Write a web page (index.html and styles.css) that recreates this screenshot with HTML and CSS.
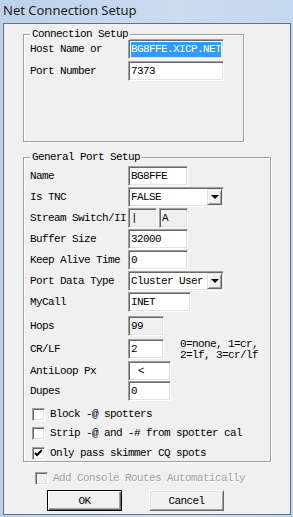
FILE: index.html
```html
<!DOCTYPE html>
<html lang="en">
<head>
  <meta charset="UTF-8">
  <meta name="viewport" content="width=device-width, initial-scale=1.0">
  <title>Net Connection Setup</title>
  <link rel="stylesheet" href="styles.css">
</head>
<body>
  <div class="window">
    <div class="titlebar">Net Connection Setup</div>
    <div class="client">

      <div class="group group-conn">
        <span class="group-title">Connection Setup</span>
        <div class="row row-22">
          <span class="label">Host Name or</span>
          <div class="field w96"><span class="selected">BG8FFE.XICP.NET</span></div>
        </div>
        <div class="row row-22">
          <span class="label">Port Number</span>
          <div class="field w96">7373</div>
        </div>
      </div>

      <div class="group group-port">
        <span class="group-title">General Port Setup</span>
        <div class="row">
          <span class="label">Name</span>
          <div class="field w60">BG8FFE</div>
        </div>
        <div class="row">
          <span class="label">Is TNC</span>
          <div class="field combo w96"><span class="combo-text">FALSE</span><span class="drop"></span></div>
        </div>
        <div class="row">
          <span class="label">Stream Switch/II</span>
          <div class="field readonly w29">|</div>
          <div class="field readonly w29 gap2">A</div>
        </div>
        <div class="row">
          <span class="label">Buffer Size</span>
          <div class="field w60">32000</div>
        </div>
        <div class="row">
          <span class="label">Keep Alive Time</span>
          <div class="field w60">0</div>
        </div>
        <div class="row">
          <span class="label">Port Data Type</span>
          <div class="field combo w96"><span class="combo-text">Cluster User</span><span class="drop"></span></div>
        </div>
        <div class="row">
          <span class="label">MyCall</span>
          <div class="field w63">INET</div>
        </div>
        <div class="row mt3">
          <span class="label">Hops</span>
          <div class="field readonly w36">99</div>
        </div>
        <div class="row mt2">
          <span class="label">CR/LF</span>
          <div class="field w36">2</div>
          <div class="hint">0=none, 1=cr,<br>2=lf, 3=cr/lf</div>
        </div>
        <div class="row mt1">
          <span class="label">AntiLoop Px</span>
          <div class="field w43 indent">&lt;</div>
        </div>
        <div class="row mtn1">
          <span class="label">Dupes</span>
          <div class="field w43">0</div>
        </div>

        <div class="check-row mt6">
          <span class="check"></span><span class="check-label">Block -@ spotters</span>
        </div>
        <div class="check-row mt6">
          <span class="check"></span><span class="check-label">Strip -@ and -# from spotter cal</span>
        </div>
        <div class="check-row mt7">
          <span class="check checked">
            <svg width="9" height="9" viewBox="0 0 9 9"><path d="M1 4 L3 6 L8 1" fill="none" stroke="#000" stroke-width="2"/></svg>
          </span><span class="check-label">Only pass skimmer CQ spots</span>
        </div>
      </div>

      <div class="check-row disabled">
        <span class="check"></span><span class="check-label">Add Console Routes Automatically</span>
      </div>

      <div class="buttons">
        <button class="btn default">OK</button>
        <button class="btn">Cancel</button>
      </div>

    </div>
  </div>
</body>
</html>
```

FILE: styles.css
```css
* { box-sizing: border-box; }
body { margin: 0; width: 293px; height: 517px; overflow: hidden; background: linear-gradient(90deg, #bcd2ea, #cbdcf0 60%, #c3d7ee); }

.titlebar { height: 23px; padding-left: 3px; line-height: 21px; font-family: "Noto Sans", sans-serif; font-size: 13px; color: #1e1e1e; }
.client { margin-left: 3px; width: 288px; height: 492px; background: #f0f0f0; border: 1px solid #66717f; padding: 10px 0 0 19px; font-family: "Liberation Mono", monospace; font-size: 11px; letter-spacing: -0.6px; color: #000; }

.group { position: relative; border: 1px solid #a0a0a0; box-shadow: inset 1px 1px 0 #fff, 1px 1px 0 #fff; padding-left: 6px; }
.group-title { position: absolute; top: -7px; left: 6px; padding: 0 2px; background: #f0f0f0; line-height: 12px; }
.group-conn { width: 221px; height: 108px; padding-top: 3px; }
.group-port { width: 248px; height: 305px; margin-top: 15px; padding-top: 8px; }

.row { display: flex; align-items: flex-start; height: 21px; }
.row-22 { height: 22px; align-items: center; }
.label { width: 98px; line-height: 20px; white-space: nowrap; }

.field { height: 20px; background: #fff; border: 1px solid; border-color: #a0a0a0 #fff #fff #a0a0a0; box-shadow: inset 1px 1px 0 #696969, inset -1px -1px 0 #e3e3e3; padding-left: 2px; line-height: 18px; white-space: nowrap; overflow: hidden; }
.readonly { background: #f0f0f0; }
.w29 { width: 29px; }
.w36 { width: 36px; }
.w43 { width: 43px; }
.w60 { width: 60px; }
.w63 { width: 63px; }
.w96 { width: 96px; }
.gap2 { margin-left: 2px; }
.indent { padding-left: 9px; }
.selected { display: inline-block; background: #3399ff; color: #fff; line-height: 15px; }

.combo { display: flex; align-items: center; padding: 1px; }
.combo-text { flex: 1; padding-left: 1px; }
.drop { position: relative; width: 15px; height: 16px; background: #f0f0f0; border: 1px solid; border-color: #e3e3e3 #696969 #696969 #e3e3e3; box-shadow: inset 1px 1px 0 #fff, inset -1px -1px 0 #a0a0a0; }
.drop::after { content: ""; position: absolute; left: 3px; top: 5px; border-left: 4px solid transparent; border-right: 4px solid transparent; border-top: 4px solid #000; }

.hint { margin-left: 16px; margin-top: 0; line-height: 11px; white-space: nowrap; }

.mt1 { margin-top: 1px; }
.mt2 { margin-top: 2px; }
.mt3 { margin-top: 3px; }
.mtn1 { margin-top: -1px; }
.mt6 { margin-top: 6px; }
.mt7 { margin-top: 7px; }

.check-row { display: flex; align-items: center; height: 13px; padding-left: 2px; }
.check { display: flex; align-items: center; justify-content: center; width: 13px; height: 13px; background: #fff; border: 1px solid; border-color: #a0a0a0 #fff #fff #a0a0a0; box-shadow: inset 1px 1px 0 #696969, inset -1px -1px 0 #e3e3e3; }
.check-label { margin-left: 5px; line-height: 13px; white-space: nowrap; }
.disabled { margin-top: 10px; padding-left: 12px; }
.disabled .check { background: #f0f0f0; }
.disabled .check-label { color: #a0a0a0; text-shadow: 1px 1px 0 #fff; }

.buttons { display: flex; gap: 27px; margin: 5px 0 0 24px; }
.btn { width: 75px; height: 21px; padding: 0; background: #f0f0f0; font-family: "Liberation Mono", monospace; font-size: 11px; letter-spacing: -0.6px; color: #000; border: 1px solid; border-color: #fff #696969 #696969 #fff; box-shadow: inset 1px 1px 0 #e3e3e3, inset -1px -1px 0 #a0a0a0; }
.btn.default { border-color: #000; box-shadow: inset 1px 1px 0 #fff, inset -1px -1px 0 #696969, inset -2px -2px 0 #a0a0a0; }
```
